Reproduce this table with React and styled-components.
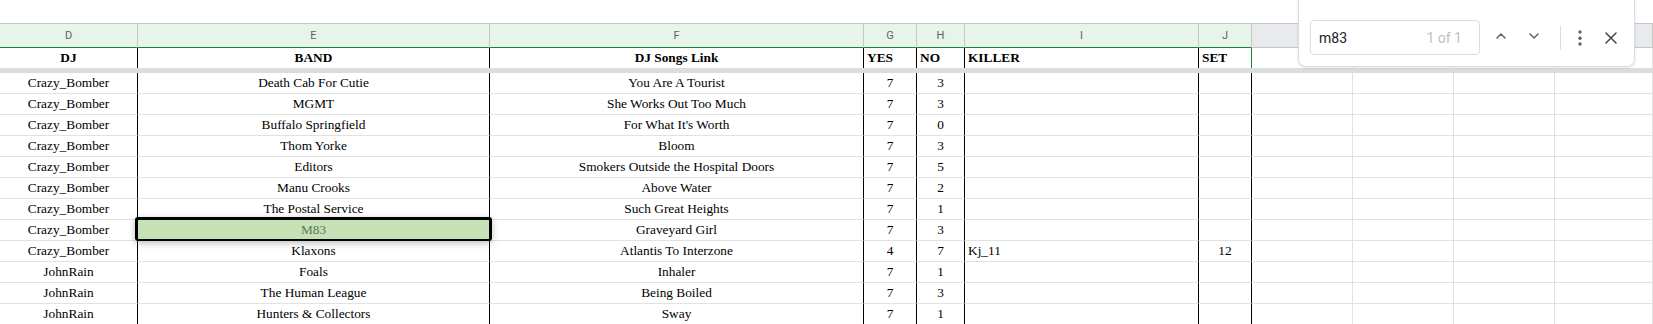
import React from "react";
import styled, { createGlobalStyle } from "styled-components";

const GlobalStyle = createGlobalStyle`
  html, body { margin: 0; padding: 0; background: #ffffff; }
  body { overflow: hidden; }
`;

const TEMPLATE = "138px 352px 374px 53px 48px 234px 53px 101px 101px 101px 1fr";

const COLUMNS = [
  { letter: "D", sel: true, align: "center", head: "DJ", headAlign: "center" },
  { letter: "E", sel: true, align: "center", head: "BAND", headAlign: "center" },
  { letter: "F", sel: true, align: "center", head: "DJ Songs Link", headAlign: "center" },
  { letter: "G", sel: true, align: "center", head: "YES", headAlign: "left" },
  { letter: "H", sel: true, align: "center", head: "NO", headAlign: "left" },
  { letter: "I", sel: true, align: "left", head: "KILLER", headAlign: "left" },
  { letter: "J", sel: true, align: "center", head: "SET", headAlign: "left", edge: true },
  { letter: "K", sel: false },
  { letter: "L", sel: false },
  { letter: "M", sel: false },
  { letter: "N", sel: false },
];

const ROWS = [
  ["Crazy_Bomber", "Death Cab For Cutie", "You Are A Tourist", "7", "3", "", ""],
  ["Crazy_Bomber", "MGMT", "She Works Out Too Much", "7", "3", "", ""],
  ["Crazy_Bomber", "Buffalo Springfield", "For What It's Worth", "7", "0", "", ""],
  ["Crazy_Bomber", "Thom Yorke", "Bloom", "7", "3", "", ""],
  ["Crazy_Bomber", "Editors", "Smokers Outside the Hospital Doors", "7", "5", "", ""],
  ["Crazy_Bomber", "Manu Crooks", "Above Water", "7", "2", "", ""],
  ["Crazy_Bomber", "The Postal Service", "Such Great Heights", "7", "1", "", ""],
  ["Crazy_Bomber", "M83", "Graveyard Girl", "7", "3", "", ""],
  ["Crazy_Bomber", "Klaxons", "Atlantis To Interzone", "4", "7", "Kj_11", "12"],
  ["JohnRain", "Foals", "Inhaler", "7", "1", "", ""],
  ["JohnRain", "The Human League", "Being Boiled", "7", "3", "", ""],
  ["JohnRain", "Hunters & Collectors", "Sway", "7", "1", "", ""],
];

const Page = styled.div`
  position: relative;
  width: 1653px;
  height: 324px;
  overflow: hidden;
  background: #ffffff;
  font-family: "Liberation Serif", "Times New Roman", serif;
`;

const TopGap = styled.div`
  height: 23px;
`;

const GridRow = styled.div`
  display: grid;
  grid-template-columns: ${TEMPLATE};
`;

const ColHead = styled.div`
  box-sizing: border-box;
  height: 25px;
  display: flex;
  align-items: center;
  justify-content: center;
  border-top: 1px solid #c4c7c5;
  border-right: 1px solid #c4c7c5;
  border-bottom: 1px solid ${(p) => (p.$sel ? "#188038" : "#c4c7c5")};
  background: ${(p) => (p.$sel ? "#e6f4ea" : "#e8eaed")};
  color: #5f6368;
  font-family: Roboto, Arial, sans-serif;
  font-size: 11px;
`;

const HeadCell = styled.div`
  box-sizing: border-box;
  height: 20px;
  line-height: 20px;
  padding: 0 3px;
  white-space: nowrap;
  overflow: hidden;
  text-align: ${(p) => p.$align || "left"};
  font-weight: 700;
  font-size: 13.33px;
  color: #000;
  border-right: 1px solid
    ${(p) => (p.$edge ? "#188038" : p.$sel ? "#000000" : "#e2e2e3")};
`;

const FreezeBar = styled.div`
  height: 5px;
  background: #dadce0;
`;

const Cell = styled.div`
  position: relative;
  box-sizing: border-box;
  height: 21px;
  line-height: 20px;
  padding: 0 3px;
  white-space: nowrap;
  text-align: ${(p) => p.$align || "left"};
  font-size: 13.33px;
  color: ${(p) => (p.$active ? "#5b7a57" : "#000000")};
  background: ${(p) => (p.$active ? "#c6e1b6" : "transparent")};
  border-bottom: 1px solid #e2e2e3;
  border-right: 1px solid ${(p) => (p.$dark ? "#000000" : "#e2e2e3")};

  &::after {
    content: "";
    display: ${(p) => (p.$active ? "block" : "none")};
    position: absolute;
    top: -3px;
    left: -3px;
    right: -3px;
    bottom: -1px;
    border: 2px solid #000000;
    border-top-width: 3px;
    border-radius: 3px;
    box-shadow: 0 2px 7px rgba(60, 64, 67, 0.35);
    z-index: 2;
    pointer-events: none;
  }
`;

const FindBar = styled.div`
  position: absolute;
  top: 0;
  left: 1298px;
  width: 337px;
  height: 67px;
  box-sizing: border-box;
  display: flex;
  align-items: center;
  padding: 20px 7px 11px 11px;
  background: #ffffff;
  border: 1px solid #dadce0;
  border-top: none;
  border-radius: 0 0 8px 8px;
  box-shadow: 0 1px 3px rgba(60, 64, 67, 0.12);
  z-index: 5;
  font-family: Roboto, Arial, sans-serif;
`;

const SearchField = styled.div`
  box-sizing: border-box;
  width: 170px;
  height: 35px;
  flex: none;
  display: flex;
  align-items: center;
  justify-content: space-between;
  padding: 0 17px 0 8px;
  border: 1px solid #dadce0;
  border-radius: 4px;
  font-size: 14px;
`;

const Query = styled.span`
  color: #202124;
`;

const Count = styled.span`
  color: #bdc1c6;
`;

const IconButton = styled.div`
  flex: none;
  width: ${(p) => p.$w}px;
  height: 35px;
  margin-left: ${(p) => p.$ml || 0}px;
  display: flex;
  align-items: center;
  justify-content: center;
`;

const Chevron = styled.svg`
  margin-bottom: 4px;
`;

const Divider = styled.div`
  flex: none;
  width: 1px;
  height: 24px;
  margin: 0 4px 0 10px;
  background: #dadce0;
`;

function ChevronIcon({ up }) {
  return (
    <Chevron width="10" height="6" viewBox="0 0 10 6">
      <path
        d={up ? "M1 5L5 1L9 5" : "M1 1L5 5L9 1"}
        fill="none"
        stroke="#5f6368"
        strokeWidth="1.5"
        strokeLinecap="round"
        strokeLinejoin="round"
      />
    </Chevron>
  );
}

function KebabIcon() {
  return (
    <svg width="4" height="16" viewBox="0 0 4 16">
      <circle cx="2" cy="2" r="1.7" fill="#5f6368" />
      <circle cx="2" cy="8.3" r="1.7" fill="#5f6368" />
      <circle cx="2" cy="14" r="1.7" fill="#5f6368" />
    </svg>
  );
}

function CloseIcon() {
  return (
    <svg width="12" height="12" viewBox="0 0 12 12">
      <path
        d="M1 1L11 11M11 1L1 11"
        fill="none"
        stroke="#444746"
        strokeWidth="1.5"
        strokeLinecap="round"
      />
    </svg>
  );
}

export default function App() {
  return (
    <Page>
      <GlobalStyle />
      <TopGap />
      <GridRow>
        {COLUMNS.map((c) => (
          <ColHead key={c.letter} $sel={c.sel}>
            {c.letter}
          </ColHead>
        ))}
      </GridRow>
      <GridRow>
        {COLUMNS.map((c) => (
          <HeadCell key={c.letter} $sel={c.sel} $edge={c.edge} $align={c.headAlign}>
            {c.head || ""}
          </HeadCell>
        ))}
      </GridRow>
      <FreezeBar />
      {ROWS.map((row, ri) => (
        <GridRow key={ri}>
          {COLUMNS.map((c, ci) => (
            <Cell
              key={c.letter}
              $dark={c.sel}
              $align={c.align}
              $active={row[ci] === "M83" && ci === 1}
            >
              {ci < row.length ? row[ci] : ""}
            </Cell>
          ))}
        </GridRow>
      ))}
      <FindBar>
        <SearchField>
          <Query>m83</Query>
          <Count>1 of 1</Count>
        </SearchField>
        <IconButton $w={33} $ml={4}>
          <ChevronIcon up />
        </IconButton>
        <IconButton $w={33}>
          <ChevronIcon />
        </IconButton>
        <Divider />
        <IconButton $w={30}>
          <KebabIcon />
        </IconButton>
        <IconButton $w={32}>
          <CloseIcon />
        </IconButton>
      </FindBar>
    </Page>
  );
}
